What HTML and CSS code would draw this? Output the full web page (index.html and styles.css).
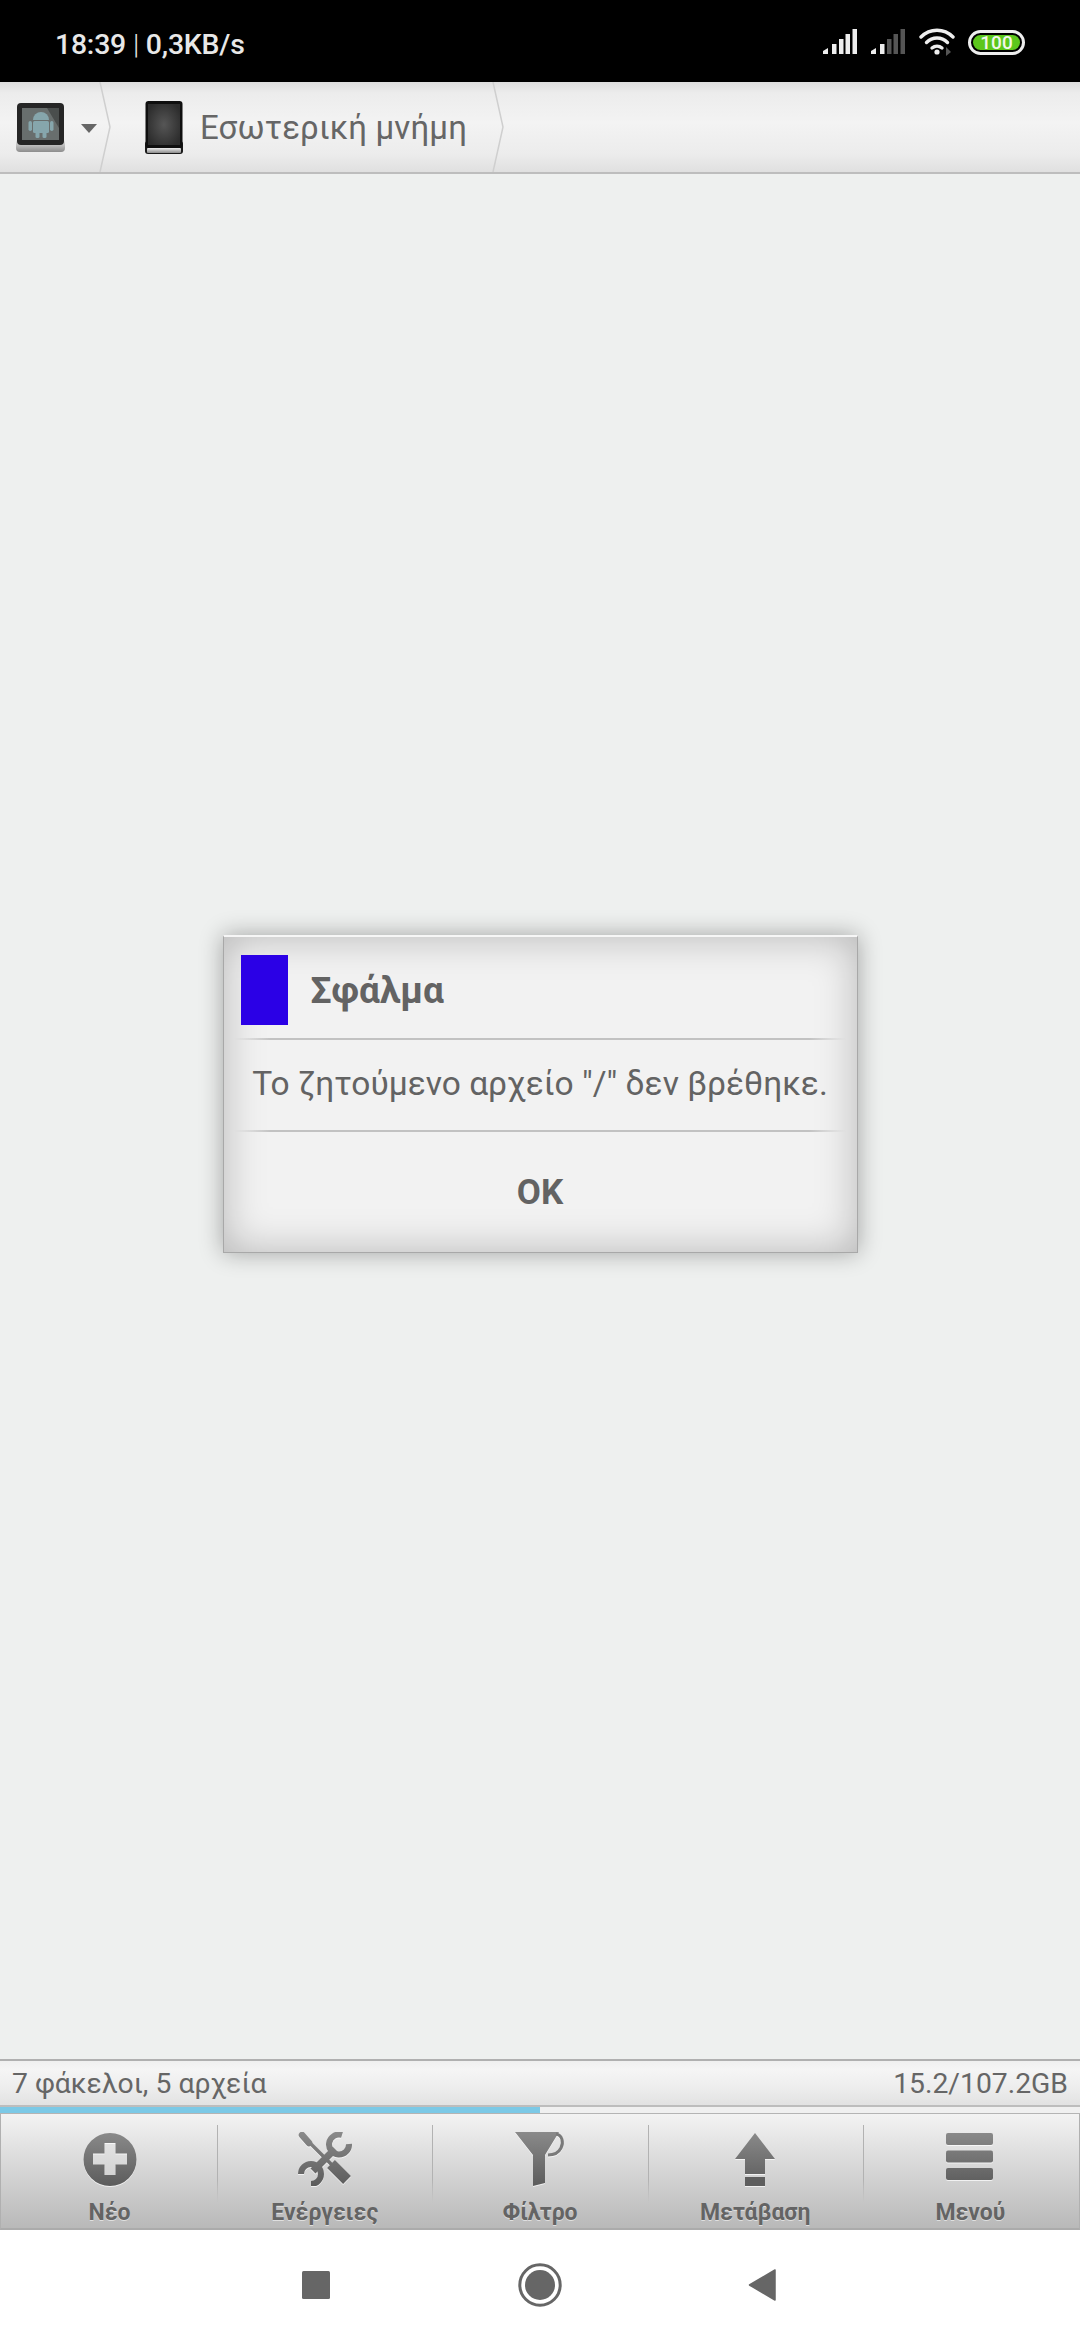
FILE: index.html
```html
<!DOCTYPE html>
<html lang="el">
<head>
<meta charset="utf-8">
<title>Εσωτερική μνήμη</title>
<link rel="stylesheet" href="styles.css">
</head>
<body>
<svg class="defs" width="0" height="0" aria-hidden="true">
  <defs>
    <linearGradient id="ig2" gradientUnits="userSpaceOnUse" x1="0" y1="0" x2="0" y2="54">
      <stop offset="0" stop-color="#8a8a8a"/>
      <stop offset="1" stop-color="#5c5c5c"/>
    </linearGradient>
    <linearGradient id="lip" x1="0" y1="0" x2="0" y2="1">
      <stop offset="0" stop-color="#ececec"/>
      <stop offset="1" stop-color="#8c8c8c"/>
    </linearGradient>
    <radialGradient id="scr" cx=".5" cy=".5" r=".6">
      <stop offset="0" stop-color="#565656"/>
      <stop offset="1" stop-color="#2c2c2c"/>
    </radialGradient>
  </defs>
</svg>
<div class="phone">
  <header class="status">
    <div class="status-text">18:39 <span class="pipe">|</span> 0,3KB/s</div>
    <div class="status-icons">
      <svg width="34" height="26" viewBox="0 0 34 26"><g fill="#eee"><path d="M0 25v-3l5-3v6z"/><rect x="9" y="15" width="4.5" height="10"/><rect x="16" y="10" width="4.500" height="15"/><rect x="22.500" y="5" width="4.500" height="20"/><rect x="29.500" y="0" width="4.500" height="25"/></g></svg>
      <svg width="34" height="26" viewBox="0 0 34 26"><path fill="#eee" d="M0 25v-3l5-3v6z"/><rect fill="#eee" x="9" y="15" width="4.5" height="10"/><g fill="#555"><rect x="16" y="10" width="4.500" height="15"/><rect x="22.500" y="5" width="4.500" height="20"/><rect x="29.500" y="0" width="4.500" height="25"/></g></svg>
      <svg width="36" height="30" viewBox="0 0 36 30"><g fill="none" stroke="#eee" stroke-width="3.400" stroke-linecap="round"><path d="M2 10C11 1 25 1 34 10"/><path d="M7.500 15.500C13.500 9.500 22.500 9.500 28.500 15.500"/><path d="M13 21C16 18.500 20 18.500 23 21"/></g><circle cx="18" cy="25" r="2.600" fill="#eee"/><path d="M27 20l0 9 5-4z" fill="#555"/></svg>
      <div class="battery"><span class="battery-fill">100</span></div>
    </div>
  </header>

  <nav class="crumbs">
    <div class="crumb crumb-root">
      <svg width="49" height="49" viewBox="0 0 49 49">
        <rect x="0" y="36" width="49" height="13" rx="4" fill="url(#lip)"/>
        <rect x="1" y="0" width="47" height="42" rx="4" fill="#262626"/>
        <rect x="6" y="5" width="37" height="32" fill="#686e6d"/>
        <path d="M31 5h12v20z" fill="#4a4e4d"/>
        <g fill="#86a6ac">
          <path d="M17 17a8 8 0 0 1 16 0z"/>
          <rect x="17" y="18" width="16" height="12" rx="1.500"/>
          <rect x="12.500" y="18" width="3.500" height="10" rx="1.700"/>
          <rect x="34" y="18" width="3.500" height="10" rx="1.700"/>
          <rect x="19.500" y="29" width="4" height="6" rx="1.500"/>
          <rect x="26.500" y="29" width="4" height="6" rx="1.500"/>
        </g>
      </svg>
      <svg class="caret" width="16" height="9" viewBox="0 0 16 9"><path d="M0 0h16l-8 9z" fill="#666"/></svg>
    </div>
    <svg class="chev" width="12" height="90" viewBox="0 0 12 90"><path d="M1 0l10 45L1 90" fill="none" stroke="#cfcfcf" stroke-width="1.500"/></svg>
    <div class="crumb crumb-main">
      <svg width="38" height="53" viewBox="0 0 38 53">
        <rect x="0" y="40" width="38" height="13" rx="3" fill="#1a1a1a"/>
        <rect x="0.500" y="0" width="37" height="47" rx="3" fill="#0f0f0f"/>
        <rect x="3" y="3" width="32" height="41" fill="url(#scr)"/>
        <rect x="2" y="47" width="34" height="5" rx="1" fill="url(#lip)"/>
      </svg>
      <span class="crumb-label">Εσωτερική μνήμη</span>
    </div>
    <svg class="chev" width="12" height="90" viewBox="0 0 12 90"><path d="M1 0l10 45L1 90" fill="none" stroke="#cfcfcf" stroke-width="1.500"/></svg>
  </nav>

  <main class="content">
    <section class="dialog">
      <div class="dialog-title">
        <div class="dialog-icon"></div>
        <h1>Σφάλμα</h1>
      </div>
      <div class="rule"></div>
      <p class="dialog-msg">Το ζητούμενο αρχείο "/" δεν βρέθηκε.</p>
      <div class="rule"></div>
      <div class="dialog-ok">OK</div>
    </section>
  </main>

  <div class="info">
    <span>7 φάκελοι, 5 αρχεία</span>
    <span>15.2/107.2GB</span>
  </div>
  <div class="progress"><div class="progress-fill"></div></div>

  <div class="tabs">
    <div class="tab">
      <svg class="ico" width="54" height="54" viewBox="0 0 54 54"><path fill="url(#ig2)" fill-rule="evenodd" d="M27 1a26.500 26.500 0 1 0 0 53a26.500 26.500 0 1 0 0-53zM21.500 11h11v10.500h11.500v11H32.500V43h-11V32.500H10v-11h11.500z"/></svg>
      <span>Νέο</span>
    </div>
    <div class="tab">
      <svg class="ico" width="54" height="54" viewBox="0 0 54 54"><g fill="none" stroke="url(#ig2)" stroke-linecap="round">
        <path stroke-width="6.500" d="M4 3l7 8"/>
        <path stroke-width="3.500" stroke-linecap="butt" d="M8 7l28 28"/>
        <path stroke-width="11" stroke-linecap="butt" d="M33 32l16 16"/>
        <path stroke-width="7" stroke-linecap="butt" d="M37 17L15 39"/>
        <path stroke-width="6" stroke-linecap="butt" d="M44 3A10 10 0 1 0 51 12"/>
        <path stroke-width="6" stroke-linecap="butt" d="M3 42A10 10 0 1 1 13 52"/>
      </g></svg>
      <span>Ενέργειες</span>
    </div>
    <div class="tab">
      <svg class="ico" width="54" height="54" viewBox="0 0 54 54"><path fill="url(#ig2)" d="M2 0h44L32 23v28l-12 3V23z"/><path d="M43 2c6 1 8 8 5 14-2 4-7 7-13 7" fill="none" stroke="#7a7a7a" stroke-width="3"/></svg>
      <span>Φίλτρο</span>
    </div>
    <div class="tab">
      <svg class="ico" width="54" height="54" viewBox="0 0 54 54"><path fill="url(#ig2)" d="M27 1l20 26H37v15H17V27H7z"/><rect x="17" y="45" width="20" height="9" fill="#5e5e5e"/></svg>
      <span>Μετάβαση</span>
    </div>
    <div class="tab">
      <svg class="ico" width="54" height="54" viewBox="0 0 54 54"><g fill="url(#ig2)"><rect x="3" y="1" width="47" height="12" rx="2"/><rect x="3" y="18.500" width="47" height="12" rx="2"/><rect x="3" y="36" width="47" height="12" rx="2"/></g></svg>
      <span>Μενού</span>
    </div>
  </div>

  <footer class="navbar">
    <svg width="28" height="28" viewBox="0 0 28 28"><rect width="28" height="28" rx="1.500" fill="#666"/></svg>
    <svg width="44" height="44" viewBox="0 0 44 44"><circle cx="22" cy="22" r="20.200" fill="none" stroke="#666" stroke-width="3"/><circle cx="22" cy="22" r="15" fill="#666"/></svg>
    <svg width="28" height="32" viewBox="0 0 28 32"><path d="M1.500 16L27 1v30z" fill="#666" stroke="#666" stroke-width="1.500" stroke-linejoin="round"/></svg>
  </footer>
</div>
</body>
</html>
```
FILE: styles.css
```css
* { box-sizing: border-box; }
html, body { margin: 0; padding: 0; }
body { width: 1080px; height: 2340px; overflow: hidden; font-family: Roboto, "Noto Sans", sans-serif; background: #fff; }
.defs { display: block; position: absolute; }
.phone { width: 1080px; height: 2340px; display: flex; flex-direction: column; }

.status { height: 82px; flex: none; background: #000; display: flex; align-items: center; justify-content: space-between; padding: 0 55px 0 55px; color: #e8e8e8; }
.status-text { font-size: 28.4px; font-weight: 500; letter-spacing: -0.2px; padding-top: 7px; }
.pipe { font-weight: 300; }
.status-icons { display: flex; align-items: center; gap: 14px; padding-top: 2px; }
.battery { width: 57px; height: 25px; border: 3px solid #eee; border-radius: 13px; padding: 2px; display: flex; margin-left: -1px; }
.battery-fill { flex: 1; background: #5cc71c; border-radius: 9px; color: #f2f8ea; font-size: 19px; font-weight: 500; line-height: 15px; text-align: center; }

.crumbs { height: 92px; flex: none; display: flex; align-items: center; border-bottom: 2px solid #bdbdbd; background: linear-gradient(#dedede 0, #ececec 12%, #f3f3f3 45%, #ececec 80%, #e0e0e0 100%); }
.crumb { display: flex; align-items: center; }
.crumb-root { width: 99px; padding-left: 16px; gap: 16px; }
.caret { margin-top: 2px; }
.crumb-main { width: 381px; padding-left: 34px; gap: 17px; margin-top: 1px; }
.crumb-label { font-size: 33px; color: #666; letter-spacing: 0.15px; }
.chev { flex: none; }

.content { flex: 1; background: #eef0ef; display: flex; justify-content: center; align-items: center; padding-bottom: 46px; }
.dialog { width: 635px; height: 318px; background: #f2f2f2; border: 1px solid #a8a8a8; border-top: 2px solid #f6f6f6; box-shadow: 0 0 22px rgba(0,0,0,.32), inset 0 0 40px rgba(0,0,0,.25); display: flex; flex-direction: column; align-items: center; color: #636363; }
.dialog-title { height: 101px; width: 100%; flex: none; display: flex; align-items: center; padding: 6px 0 0 17px; gap: 23px; }
.dialog-icon { width: 47px; height: 70px; background: #2b00e6; }
.dialog-title h1 { margin: 0; font-size: 37px; font-weight: 700; }
.rule { flex: none; width: 612px; height: 2px; background: linear-gradient(90deg, transparent, #c2c2c2 6%, #c2c2c2 94%, transparent); }
.dialog-msg { margin: 0; height: 90px; flex: none; font-size: 33.5px; line-height: 88px; }
.dialog-ok { flex: 1; font-size: 35px; font-weight: 700; display: flex; align-items: center; padding-top: 2px; }

.info { height: 48px; flex: none; display: flex; align-items: center; justify-content: space-between; padding: 0 12px; border-top: 2px solid #b0b0b0; border-bottom: 2px solid #bdbdbd; background: linear-gradient(#f0f0f0, #f5f5f5 20%, #ececec 65%, #e2e2e2); font-size: 28.3px; color: #666; }
.progress { height: 7px; flex: none; background: #f0f0f0; border-bottom: 1px solid #b4b4b4; }
.progress-fill { width: 540px; height: 100%; background: #7cc9e6; }

.tabs { height: 116px; flex: none; display: grid; grid-template-columns: repeat(5, 1fr); padding: 0 1px; border: 1px solid #b0b0b0; border-top: 0; border-bottom: 2px solid #ababab; background: linear-gradient(#f3f3f3, #dedede 35%, #b9b9b9); }
.tab { position: relative; display: flex; flex-direction: column; align-items: center; padding-top: 18px; color: #646464; font-size: 23px; font-weight: 700; text-shadow: 0 1px 0 rgba(255,255,255,.55); }
.tab span { line-height: 30px; margin-top: 12px; }
.tab + .tab::before { content: ""; position: absolute; left: 0; top: 11px; height: 78px; width: 1px; background: linear-gradient(#b2b2b2 70%, transparent); }
.ico { display: block; flex: none; filter: drop-shadow(0 1px 0 rgba(255,255,255,.7)); }

.navbar { height: 110px; flex: none; background: #fff; display: flex; align-items: center; padding: 0 0 0 302px; }
.navbar svg:nth-child(1) { margin-right: 188px; }
.navbar svg:nth-child(2) { margin-right: 186px; }
```
